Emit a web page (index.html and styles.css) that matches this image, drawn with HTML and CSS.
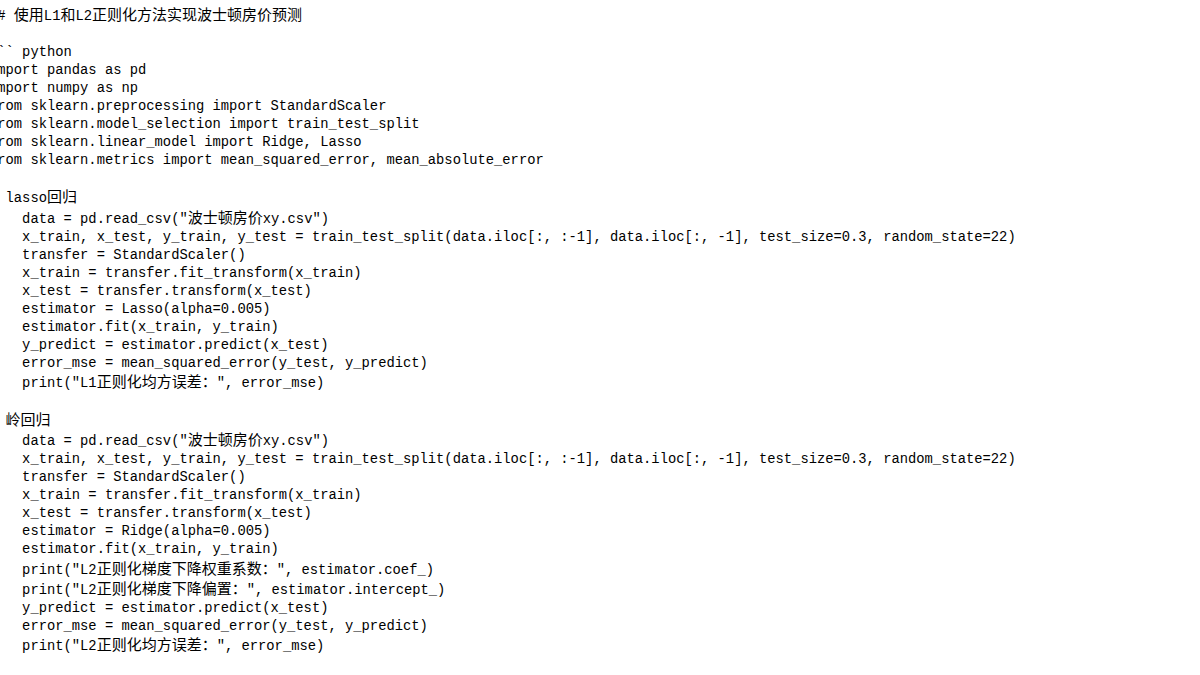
FILE: index.html
```html
<!DOCTYPE html>
<html lang="zh-CN">
<head>
<meta charset="utf-8">
<title>使用L1和L2正则化方法实现波士顿房价预测</title>
<link rel="stylesheet" href="styles.css">
</head>
<body>
<pre class="code"><div class="ln"> # <span class="z">使用</span>L1<span class="z">和</span>L2<span class="z">正则化方法实现波士顿房价预测</span></div><div class="ln"> </div><div class="ln">``` python</div><div class="ln">import pandas as pd</div><div class="ln">import numpy as np</div><div class="ln">from sklearn.preprocessing import StandardScaler</div><div class="ln">from sklearn.model_selection import train_test_split</div><div class="ln">from sklearn.linear_model import Ridge, Lasso</div><div class="ln">from sklearn.metrics import mean_squared_error, mean_absolute_error</div><div class="ln"> </div><div class="ln c"># lasso<span class="z">回归</span></div><div class="ln c">    data = pd.read_csv("<span class="z">波士顿房价</span>xy.csv")</div><div class="ln">    x_train, x_test, y_train, y_test = train_test_split(data.iloc[:, :-1], data.iloc[:, -1], test_size=0.3, random_state=22)</div><div class="ln">    transfer = StandardScaler()</div><div class="ln">    x_train = transfer.fit_transform(x_train)</div><div class="ln">    x_test = transfer.transform(x_test)</div><div class="ln">    estimator = Lasso(alpha=0.005)</div><div class="ln">    estimator.fit(x_train, y_train)</div><div class="ln">    y_predict = estimator.predict(x_test)</div><div class="ln">    error_mse = mean_squared_error(y_test, y_predict)</div><div class="ln c">    print("L1<span class="z">正则化均方误差：</span>", error_mse)</div><div class="ln"> </div><div class="ln c"># <span class="z">岭回归</span></div><div class="ln c">    data = pd.read_csv("<span class="z">波士顿房价</span>xy.csv")</div><div class="ln">    x_train, x_test, y_train, y_test = train_test_split(data.iloc[:, :-1], data.iloc[:, -1], test_size=0.3, random_state=22)</div><div class="ln">    transfer = StandardScaler()</div><div class="ln">    x_train = transfer.fit_transform(x_train)</div><div class="ln">    x_test = transfer.transform(x_test)</div><div class="ln">    estimator = Ridge(alpha=0.005)</div><div class="ln">    estimator.fit(x_train, y_train)</div><div class="ln c">    print("L2<span class="z">正则化梯度下降权重系数：</span>", estimator.coef_)</div><div class="ln c">    print("L2<span class="z">正则化梯度下降偏置：</span>", estimator.intercept_)</div><div class="ln">    y_predict = estimator.predict(x_test)</div><div class="ln">    error_mse = mean_squared_error(y_test, y_predict)</div><div class="ln c">    print("L2<span class="z">正则化均方误差：</span>", error_mse)</div></pre>
</body>
</html>
```
FILE: styles.css
```css
html, body {
  margin: 0;
  padding: 0;
  background: #ffffff;
  overflow: hidden;
}

.code {
  margin: 0 0 0 -11px;
  padding: 8px 0 0 0;
  font-family: "Liberation Mono", "DejaVu Sans Mono", monospace;
  font-size: 13.8px;
  color: #000000;
}

.ln {
  height: 18px;
  line-height: 18px;
  white-space: pre;
}

.ln.c {
  box-sizing: border-box;
  height: 20.25px;
  padding-top: 2.25px;
}

.z {
  font-family: "Noto Sans CJK SC", "Noto Sans CJK JP", sans-serif;
  font-size: 15px;
  line-height: 0;
}
```
